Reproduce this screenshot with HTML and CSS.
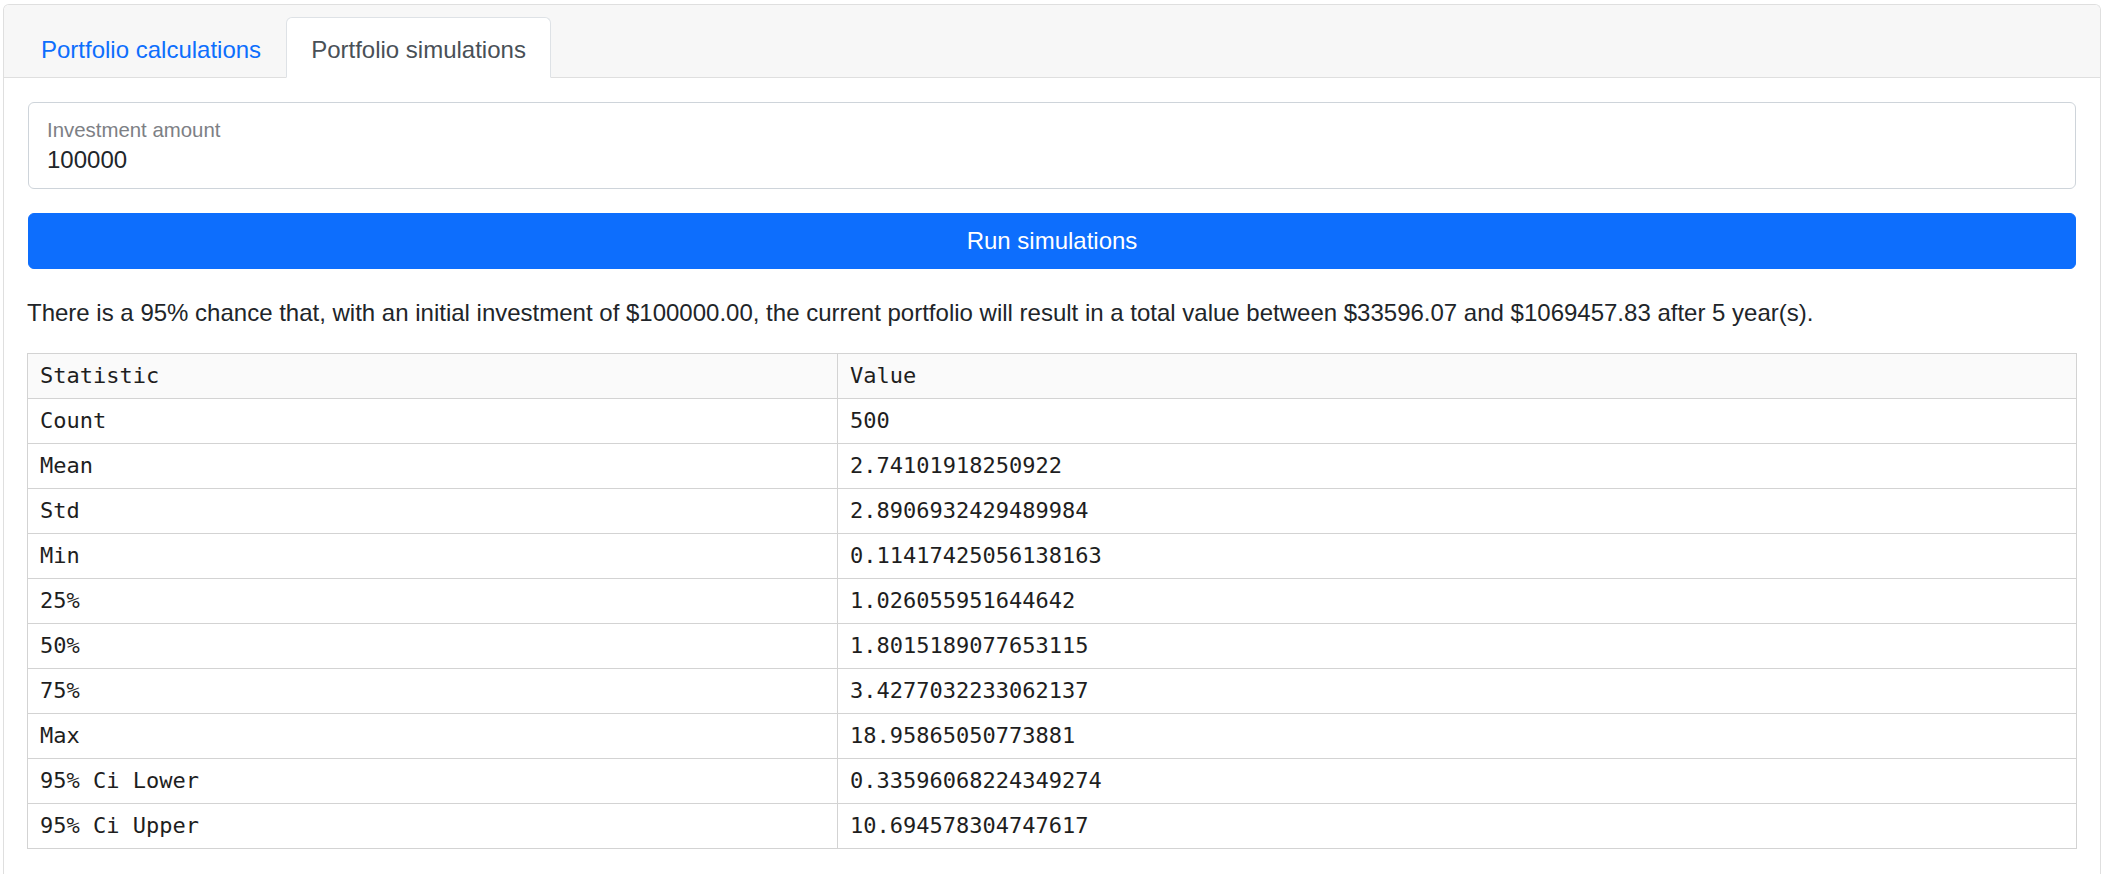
FILE: index.html
```html
<!DOCTYPE html>
<html lang="en">
<head>
<meta charset="utf-8">
<title>Portfolio simulations</title>
<link rel="stylesheet" href="styles.css">
</head>
<body>
<div class="page">
  <div class="card">
    <div class="card-header">
      <ul class="tabs">
        <li class="tab-item"><a class="tab" href="#">Portfolio calculations</a></li>
        <li class="tab-item"><a class="tab active" href="#">Portfolio simulations</a></li>
      </ul>
    </div>
    <div class="card-body">
      <div class="floating">
        <input class="field" type="text" value="100000">
        <label class="field-label">Investment amount</label>
      </div>
      <button class="run" type="button">Run simulations</button>
      <p class="summary">There is a 95% chance that, with an initial investment of $100000.00, the current portfolio will result in a total value between $33596.07 and $1069457.83 after 5 year(s).</p>
      <div class="table-wrap">
        <table class="stats">
          <colgroup>
            <col class="col-stat">
            <col class="col-value">
          </colgroup>
          <thead>
            <tr><th>Statistic</th><th>Value</th></tr>
          </thead>
          <tbody>
            <tr><td>Count</td><td>500</td></tr>
            <tr><td>Mean</td><td>2.74101918250922</td></tr>
            <tr><td>Std</td><td>2.8906932429489984</td></tr>
            <tr><td>Min</td><td>0.11417425056138163</td></tr>
            <tr><td>25%</td><td>1.026055951644642</td></tr>
            <tr><td>50%</td><td>1.8015189077653115</td></tr>
            <tr><td>75%</td><td>3.4277032233062137</td></tr>
            <tr><td>Max</td><td>18.95865050773881</td></tr>
            <tr><td>95% Ci Lower</td><td>0.33596068224349274</td></tr>
            <tr><td>95% Ci Upper</td><td>10.694578304747617</td></tr>
          </tbody>
        </table>
      </div>
    </div>
  </div>
</div>
</body>
</html>
```

FILE: styles.css
```css
* {
  box-sizing: border-box;
}

html, body {
  margin: 0;
  padding: 0;
  background: #ffffff;
}

body {
  font-family: "Liberation Sans", Arial, sans-serif;
  font-size: 24px;
  line-height: 36px;
  color: #212529;
}

.page {
  padding: 4px 3px 0 3px;
}

.card {
  border: 1px solid #dfdfdf;
  border-bottom: none;
  border-radius: 6px 6px 0 0;
  background: #ffffff;
}

.card-header {
  background: #f7f7f7;
  border-bottom: 1px solid #dfdfdf;
  border-radius: 5px 5px 0 0;
  padding: 12px 24px 0 24px;
}

.tabs {
  list-style: none;
  margin: 0 -12px -1px -12px;
  padding: 0;
  display: flex;
}

.tab-item {
  display: block;
}

.tab {
  display: block;
  padding: 14px 24px 9px 24px;
  line-height: 36px;
  border: 1px solid transparent;
  border-radius: 6px 6px 0 0;
  color: #0d6efd;
  text-decoration: none;
}

.tab.active {
  color: #495057;
  background: #ffffff;
  border-color: #dee2e6 #dee2e6 #ffffff;
}

.card-body {
  padding: 24px 24px 0 24px;
}

.floating {
  position: relative;
  margin-bottom: 24px;
}

.field {
  display: block;
  width: 100%;
  height: 87px;
  margin: 0;
  padding: 39px 18px 10px 18px;
  border: 1px solid #ced4da;
  border-radius: 6px;
  font-family: "Liberation Sans", Arial, sans-serif;
  font-size: 24px;
  line-height: 36px;
  color: #212529;
  background: #ffffff;
  outline: none;
}

.field-label {
  position: absolute;
  left: 19px;
  top: 13px;
  font-size: 20.4px;
  line-height: 30px;
  color: #7d8085;
}

.run {
  display: block;
  width: 100%;
  height: 56px;
  margin: 0;
  padding: 9px 18px;
  border: 1px solid #0d6efd;
  border-radius: 6px;
  background: #0d6efd;
  color: #ffffff;
  font-family: "Liberation Sans", Arial, sans-serif;
  font-size: 24px;
  line-height: 36px;
  text-align: center;
}

.summary {
  margin: 26px 0 22px -1px;
  line-height: 36px;
  white-space: nowrap;
}

.table-wrap {
  margin: 0 0 0 -1px;
  padding-bottom: 40px;
}

.stats {
  width: calc(100% + 1px);
  border-collapse: collapse;
  table-layout: fixed;
  font-family: "DejaVu Sans Mono", "Liberation Mono", monospace;
  font-size: 22px;
  color: #1e1e1e;
}

.col-stat {
  width: 810px;
}

.stats th,
.stats td {
  border: 1px solid #d3d3d3;
  height: 45px;
  padding: 0 12px;
  line-height: 44px;
  text-align: left;
  font-weight: normal;
  white-space: nowrap;
}

.stats thead th {
  background: #fafafa;
}
```
